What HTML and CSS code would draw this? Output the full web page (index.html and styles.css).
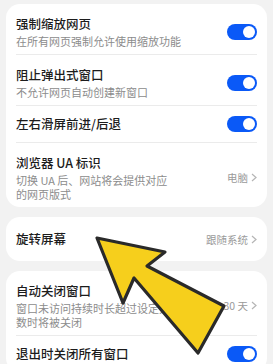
FILE: index.html
```html
<!DOCTYPE html>
<html lang="zh">
<head>
<meta charset="utf-8">
<link rel="stylesheet" href="styles.css">
</head>
<body>
<div class="page">
  <section class="card">
    <div class="row two">
      <div class="text"><div class="title">强制缩放网页</div><div class="sub">在所有网页强制允许使用缩放功能</div></div>
      <span class="switch"><span class="knob"></span></span>
    </div>
    <div class="row two">
      <div class="text"><div class="title">阻止弹出式窗口</div><div class="sub">不允许网页自动创建新窗口</div></div>
      <span class="switch"><span class="knob"></span></span>
    </div>
    <div class="row one">
      <div class="text"><div class="title">左右滑屏前进/后退</div></div>
      <span class="switch"><span class="knob"></span></span>
    </div>
    <div class="row two">
      <div class="text"><div class="title">浏览器 UA 标识</div><div class="sub narrow">切换 UA 后、网站将会提供对应的网页版式</div></div>
      <span class="value">电脑<svg class="chev" width="6" height="9" viewBox="0 0 6 9"><polyline points="1,1 5,4.5 1,8" fill="none" stroke="#b5b5b5" stroke-width="1.2"/></svg></span>
    </div>
  </section>
  <section class="card">
    <div class="row single">
      <div class="text"><div class="title">旋转屏幕</div></div>
      <span class="value">跟随系统<svg class="chev" width="6" height="9" viewBox="0 0 6 9"><polyline points="1,1 5,4.5 1,8" fill="none" stroke="#b5b5b5" stroke-width="1.2"/></svg></span>
    </div>
  </section>
  <section class="card">
    <div class="row two">
      <div class="text"><div class="title">自动关闭窗口</div><div class="sub narrow">窗口未访问持续时长超过设定天数时将被关闭</div></div>
      <span class="value">30 天<svg class="chev" width="6" height="9" viewBox="0 0 6 9"><polyline points="1,1 5,4.5 1,8" fill="none" stroke="#b5b5b5" stroke-width="1.2"/></svg></span>
    </div>
    <div class="row one">
      <div class="text"><div class="title">退出时关闭所有窗口</div></div>
      <span class="switch"><span class="knob"></span></span>
    </div>
  </section>
</div>
<svg class="arrow" width="273" height="364" viewBox="0 0 273 364">
  <polygon points="97,238 165,252 147,266 224,306 198,353 134,278 123,303" fill="#f6cf1c" stroke="#2a2a2a" stroke-width="3.2" stroke-linejoin="round"/>
</svg>
</body>
</html>
```
FILE: styles.css
```css
html, body {
  margin: 0;
  padding: 0;
}
body {
  width: 273px;
  height: 364px;
  overflow: hidden;
  background: #f2f2f2;
  font-family: "Noto Sans CJK SC", "Noto Sans", sans-serif;
  position: relative;
}
.page {
  display: flex;
  flex-direction: column;
  gap: 10px;
  padding: 4px 6px 0;
}
.card {
  background: #ffffff;
  border-radius: 14px;
  padding: 0 10px;
}
.row {
  display: flex;
  align-items: center;
  justify-content: space-between;
  border-top: 1px solid #ebebeb;
}
.row:first-child {
  border-top: none;
}
.row.two {
  padding: 11px 0 6px;
}
.row.one {
  min-height: 36px;
}
.row.single {
  min-height: 44px;
}
.text {
  display: flex;
  flex-direction: column;
}
.title {
  font-size: 12.5px;
  line-height: 18px;
  font-weight: 500;
  color: #1c1c1c;
}
.sub {
  font-size: 11px;
  line-height: 14px;
  margin-top: 1px;
  color: #8c8c8c;
}
.sub.narrow {
  width: 155px;
}
.switch {
  width: 30px;
  height: 16px;
  border-radius: 8px;
  background: #0a59f7;
  display: flex;
  align-items: center;
  justify-content: flex-end;
  padding: 0 2px;
  box-sizing: border-box;
  flex-shrink: 0;
}
.knob {
  width: 12px;
  height: 12px;
  border-radius: 50%;
  background: #ffffff;
}
.value {
  display: flex;
  align-items: center;
  gap: 3px;
  font-size: 10.5px;
  color: #9a9a9a;
  flex-shrink: 0;
}
.arrow {
  position: absolute;
  top: 0;
  left: 0;
}
```
